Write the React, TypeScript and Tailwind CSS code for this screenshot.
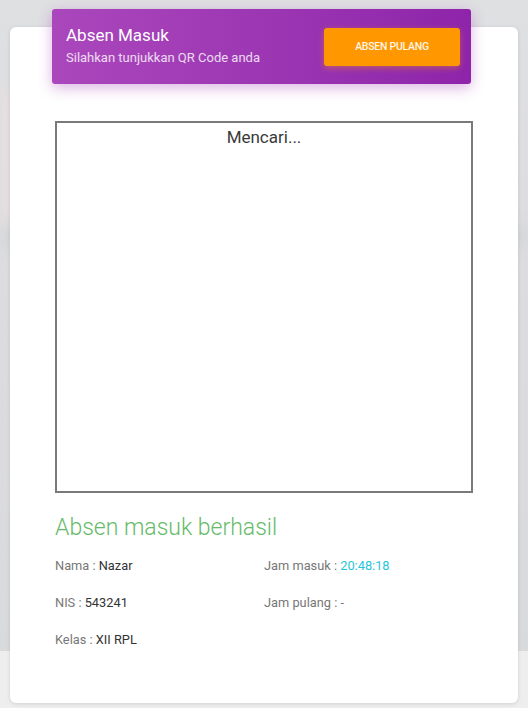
import React from 'react';

const rows: [string, string, string, string, boolean][] = [
  ['Nama', 'Nazar', 'Jam masuk', '20:48:18', true],
  ['NIS', '543241', 'Jam pulang', '-', false],
  ['Kelas', 'XII RPL', '', '', false],
];

export default function App() {
  return (
    <div
      className="relative w-[528px] h-[708px] overflow-hidden bg-[#eeeeee]"
      style={{ fontFamily: 'Roboto, "Noto Sans", sans-serif' }}
    >
      {/* blurred page behind the card */}
      <div className="absolute inset-x-0 top-0 h-[651px] bg-gradient-to-b from-[#dfe0e2] via-[#dcdcde] to-[#d9dadc]" />
      <div className="absolute left-0 top-[90px] w-[30px] h-[140px] bg-[#e6dfe1] blur-sm" />
      <div className="absolute inset-x-0 top-[226px] h-[20px] bg-[#d3d5d7] blur-sm" />

      <div className="relative mx-[10px] mt-[27px] h-[676px] flex flex-col rounded-md bg-white shadow-[0_1px_4px_rgba(0,0,0,0.12)] px-[45px]">
        {/* header */}
        <div className="-mt-[18px] -ml-[3px] mr-[2px] h-[75px] shrink-0 rounded-[3px] bg-gradient-to-r from-[#ab47bc] to-[#8e24aa] shadow-[0_4px_14px_rgba(156,39,176,0.35)] flex items-center justify-between pl-[14px] pr-[11px]">
          <div className="flex flex-col pb-[3px]">
            <div className="text-[17px] leading-[22px] text-white">Absen Masuk</div>
            <div className="text-[13px] leading-[18px] mt-[3px] text-white/80">
              Silahkan tunjukkan QR Code anda
            </div>
          </div>
          <button className="w-[136px] h-[38px] rounded-[3px] bg-[#ff9800] text-white/90 text-[10.5px] font-medium tracking-tight shadow-[0_2px_6px_rgba(255,152,0,0.4)]">
            ABSEN PULANG
          </button>
        </div>

        {/* scanner */}
        <div className="mt-[37px] h-[372px] shrink-0 border-2 border-[#7a7a7a] flex justify-center">
          <div className="text-[17px] leading-[20px] text-[#3a3a3a] mt-[4px]">Mencari...</div>
        </div>

        {/* result */}
        <div className="mt-[21px] text-[23px] leading-[28px] font-light text-[#66bb6a]">
          Absen masuk berhasil
        </div>
        <div className="mt-[16px] grid grid-cols-2 gap-y-[21px] text-[12.8px] leading-[16px]">
          {rows.map(([l1, v1, l2, v2, cyan]) => (
            <React.Fragment key={l1}>
              <div className="text-[#777]">
                {l1} : <span className="text-[#333]">{v1}</span>
              </div>
              <div className="text-[#777]">
                {l2 && (
                  <>
                    {l2} : <span className={cyan ? 'text-[#26c6da]' : 'text-[#777]'}>{v2}</span>
                  </>
                )}
              </div>
            </React.Fragment>
          ))}
        </div>
      </div>
    </div>
  );
}
